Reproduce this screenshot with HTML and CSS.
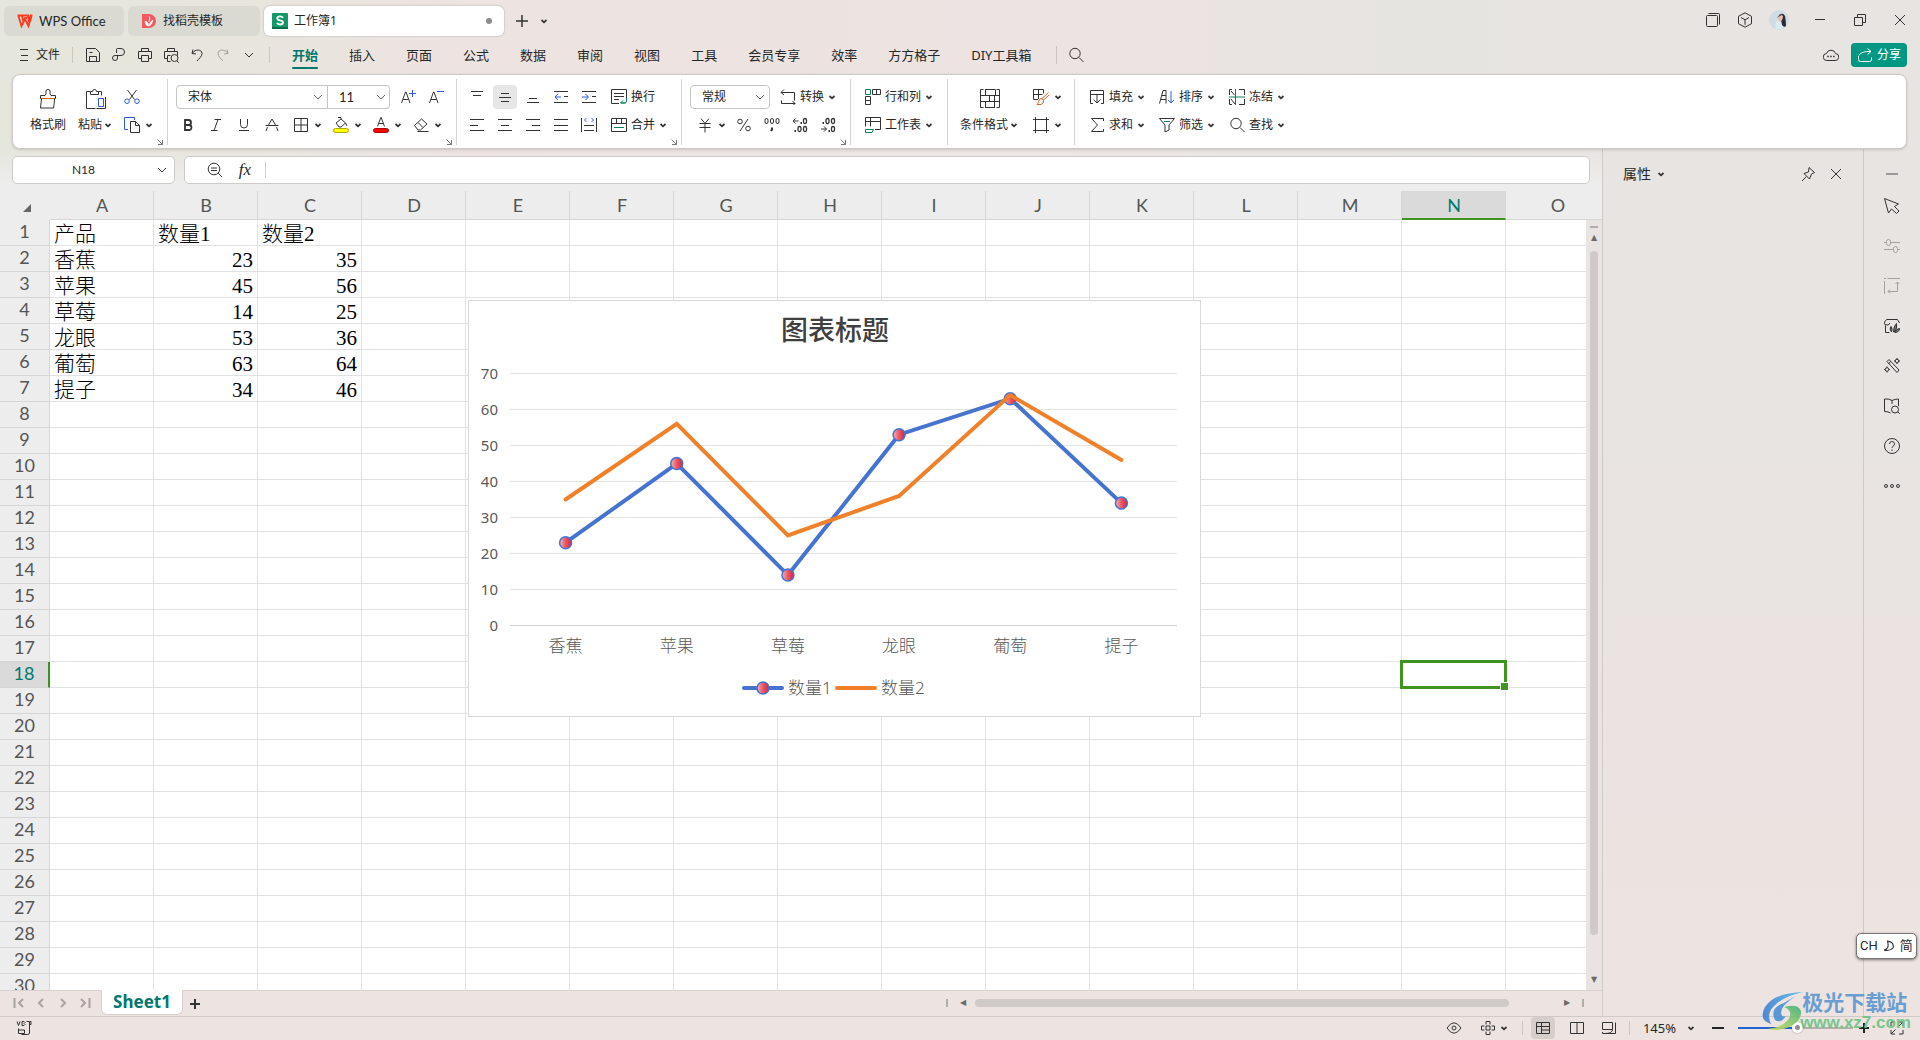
FILE: index.html
```html
<!DOCTYPE html>
<html lang="zh-CN">
<head>
<meta charset="utf-8">
<title>工作簿1 - WPS Office</title>
<link rel="stylesheet" href="styles.css">
</head>
<body>
<svg class="sprite" aria-hidden="true">
  <symbol id="chev" viewBox="0 0 12 12"><path d="M3.500 5 6 7.300 8.500 5" stroke-width="1.700"/></symbol>
  <symbol id="chev-thin" viewBox="0 0 12 12"><path d="M2 4l4 4 4-4"/></symbol>
  <symbol id="menu" viewBox="0 0 16 16"><path d="M4 2.500h8M5 8.500h7M4 13.500h8"/></symbol>
  <symbol id="save" viewBox="0 0 16 16"><path d="M1.500 1.500h9l4 4v9h-13zM4.500 14.500v-5h7v5M4.500 5.500h3"/></symbol>
  <symbol id="pdf" viewBox="0 0 16 16"><path d="M5.500 6V2.500Q5.500 1.500 6.500 1.500H10a3.500 3.500 0 0 1 0 7H4a2.500 2.500 0 1 0 2.500 2.500V8.500"/></symbol>
  <symbol id="print" viewBox="0 0 16 16"><path d="M4.500 4.500v-3h7v3M4.500 11.500h-3v-7h13v7h-3M4.500 8.500h7v6h-7z"/></symbol>
  <symbol id="preview" viewBox="0 0 16 16"><path d="M4.500 4.500v-3h7v3M4.500 11.500h-3v-7h13v4M4.500 14.500v-6h3M4.500 14.500h3M14 14l1.800 1.800"/><circle cx="11.500" cy="11" r="3.500"/></symbol>
  <symbol id="undo" viewBox="0 0 16 16"><path d="M4 2.500 3 6.500l4 .5M3.500 6C6 2 13 2 13 6.500c0 3-3 5-5 7.500"/></symbol>
  <symbol id="redo" viewBox="0 0 16 16"><path d="M12 2.500l1 4-4 .5M12.500 6C10 2 3 2 3 6.500c0 3 3 5 5 7.500"/></symbol>
  <symbol id="search" viewBox="0 0 16 16"><circle cx="7" cy="6.500" r="5.200"/><path d="m11 10.500 4.500 4.500"/></symbol>
  <symbol id="plus" viewBox="0 0 16 16"><path d="M8 2v12M2 8h12" stroke-width="1.500"/></symbol>
  <symbol id="minus" viewBox="0 0 16 16"><path d="M2 8h12" stroke-width="2"/></symbol>
  <symbol id="windows" viewBox="0 0 16 16"><rect x="1.500" y="3.500" width="11" height="11" rx="1"/><path d="M3.500 1.500h10q1 0 1 1v10"/></symbol>
  <symbol id="cube" viewBox="0 0 16 16"><path d="M8 .8l6.500 3.500v7.400L8 15.200 1.500 11.700V4.300zM4 5.500l4 2.300 4-2.300M8 7.800v5"/></symbol>
  <symbol id="win-min" viewBox="0 0 16 16"><path d="M3 7.500h10"/></symbol>
  <symbol id="restore" viewBox="0 0 16 16"><path d="M2.500 5.500h8v8h-8zM5.500 5.500v-3h8v8h-3"/></symbol>
  <symbol id="close" viewBox="0 0 16 16"><path d="m3 3 10 10M13 3 3 13"/></symbol>
  <symbol id="cloud" viewBox="0 0 16 16"><path d="M4 13.500a3.500 3.500 0 0 1-.5-7 4.700 4.700 0 0 1 9 0 3.500 3.500 0 0 1-.5 7z"/><path d="M4.300 9.500h1.500m1.400 0h1.500m1.400 0h1.500" stroke-width="1.600"/></symbol>
  <symbol id="share" viewBox="0 0 16 16"><path d="M1.500 9v3.500q0 2 2 2h9q2 0 2-2V10.500M2 8.500Q4 4 14 4.500M10.500 1.500l3.500 3-3.500 3"/></symbol>
  <symbol id="brush" viewBox="0 0 20 20"><path d="M2.500 6.500h4.500l1-1.500V2q0-1.500 2-1.500T12 2v3l1 1.500h4.500v3h-15zM3.500 9.500l-1 9.500h13q1-5 1-9.500"/><path class="or" d="M3.500 9.500h13"/></symbol>
  <symbol id="paste" viewBox="0 0 20 20"><path d="M4 2.500H.500v17h9M12.500 2.500h3v4M4.500 5.500h8v-3h-2q0-2-2-2t-2 2h-2z"/><path class="bl" d="M12.500 9.500h5v8h-5z"/><path d="M19.500 8v11.500H10.500"/></symbol>
  <symbol id="cut" viewBox="0 0 16 16"><path d="m3.500 1 7 9.500M12.500 1l-7 9.500"/><g class="bl"><circle cx="3" cy="12.200" r="2.300"/><circle cx="13" cy="12.200" r="2.300"/></g></symbol>
  <symbol id="copy" viewBox="0 0 16 16"><path class="bl" d="M4 12.500H.500v-12h10V3"/><path d="M6.500 4.500h5l4 4v7h-9zM11.500 4.500v4h4"/></symbol>
  <symbol id="launch" viewBox="0 0 8 8"><path d="m1.500 1.500 5 5M6.500 2v4.500H2"/></symbol>
  <symbol id="a-plus" viewBox="0 0 16 16"><path d="m1.500 14 4-11h.5l4 11M3 10.500h5.500"/><path class="bl" d="M12.500 1v7M9 4.500h7"/></symbol>
  <symbol id="a-minus" viewBox="0 0 16 16"><path d="m1.500 14 4-11h.5l4 11M3 10.500h5.500"/><path class="bl" d="M9 2.500h7"/></symbol>
  <symbol id="bold" viewBox="0 0 16 16"><path d="M5 3h3.500a2.300 2.300 0 0 1 0 5H5zM5 8h4a2.500 2.500 0 0 1 0 5H5z" stroke-width="1.800"/></symbol>
  <symbol id="italic" viewBox="0 0 16 16"><path d="M6.500 2.500H13M3 13.500h6.500M10 2.500l-4 11"/></symbol>
  <symbol id="under" viewBox="0 0 16 16"><path d="M4.500 2v5.500a3.500 3.500 0 0 0 7 0V2M3 13.500h10"/></symbol>
  <symbol id="strike" viewBox="0 0 16 16"><path d="M1.500 8.500h13M4.500 8 8 2l3.500 6M3.500 10l-1.500 4M12.500 10l1.500 4"/></symbol>
  <symbol id="border" viewBox="0 0 16 16"><path d="M1.500 1.500h13v13h-13zM8 1.500v13M1.500 8h13"/></symbol>
  <symbol id="fill" viewBox="0 0 16 16"><path d="m3 6 5-4 4.500 4L8 10H6zM8 2V.500h-3M12.500 6q2 3 .5 3"/><rect x=".5" y="11.500" width="15" height="4" rx="2" fill="#ff0" stroke="#b3a900"/></symbol>
  <symbol id="fcolor" viewBox="0 0 16 16"><path d="m4.500 9.500 3.300-9h.4l3.300 9M5.500 6.500h5"/><rect x=".5" y="11.500" width="15" height="4" rx="2" fill="#f00" stroke="#b00000"/></symbol>
  <symbol id="erase" viewBox="0 0 16 16"><path d="M1.500 8.500l7-6.500 5.500 5-6.500 6H5zM5 5.500l5 5M4.500 14.500h11"/></symbol>
  <symbol id="v-top" viewBox="0 0 16 16"><path d="M2 2.500h12M4 6.500h8"/></symbol>
  <symbol id="v-mid" viewBox="0 0 16 16"><path d="M4 4.500h8M2 8.500h12M4 12.500h8"/></symbol>
  <symbol id="v-bot" viewBox="0 0 16 16"><path d="M4 9.500h8M2 13.500h12"/></symbol>
  <symbol id="outdent" viewBox="0 0 16 16"><path d="M1 2.500h14M11 7.500h4M1 13.500h14"/><path class="bl" d="M2 8h6M5 5 2 8l3 3"/></symbol>
  <symbol id="indent" viewBox="0 0 16 16"><path d="M1 2.500h14M11 7.500h4M1 13.500h14"/><path class="bl" d="M1 8h6M4.500 5l3 3-3 3"/></symbol>
  <symbol id="left" viewBox="0 0 16 16"><path d="M1 2.500h14M1 8.500h8M1 13.500h14"/></symbol>
  <symbol id="center" viewBox="0 0 16 16"><path d="M1 2.500h14M4 8.500h8M1 13.500h14"/></symbol>
  <symbol id="right" viewBox="0 0 16 16"><path d="M1 2.500h14M7 8.500h8M1 13.500h14"/></symbol>
  <symbol id="justify" viewBox="0 0 16 16"><path d="M1 2.500h14M1 8.500h14M1 13.500h14"/></symbol>
  <symbol id="distrib" viewBox="0 0 16 16"><path d="M.500 1v14M15.500 1v14M3 8.500h10M3 13.500h10"/><path class="bl" d="M5.500 1 3.500 3l2 2M10.500 1l2 2-2 2"/></symbol>
  <symbol id="wrap" viewBox="0 0 16 16"><path d="M8 14.500H.500v-14h15V9M3 4.500h10M3 7.500h10M3 10.500h5"/><path class="gr" d="M15.500 9v3q0 2-2 2H10M12 11.500l-2.500 2.500h5"/></symbol>
  <symbol id="merge" viewBox="0 0 16 16"><path d="M.500 1.500h15v13H.500zM.500 6.500h15M5.500 1.500v5M10.500 1.500v5"/><path class="gr" d="M3 10.500h10"/></symbol>
  <symbol id="convert" viewBox="0 0 16 16"><path d="M1.500 11.500v3H15M4 .500l-3 3h13.500v8M12.500 12l2.500 2.500-2.500 2.500M1 3.500l3 2.500"/></symbol>
  <symbol id="yen" viewBox="0 0 16 16"><path d="m4 1.500 4 5 4-5M8 6.500v9M2.500 6.500h11M2.500 10.500h11"/></symbol>
  <symbol id="percent" viewBox="0 0 16 16"><circle cx="4" cy="4.500" r="2.300"/><circle cx="12" cy="11.500" r="2.300"/><path d="m12 2-8 12"/></symbol>
  <symbol id="thousand" viewBox="0 0 16 16"><rect x="1" y="1.500" width="3" height="5" rx="1.500"/><rect x="6.500" y="1.500" width="3" height="5" rx="1.500"/><rect x="12" y="1.500" width="3" height="5" rx="1.500"/><path d="M8 10.500v2l-1 1.500" stroke-width="2"/></symbol>
  <symbol id="dec-more" viewBox="0 0 16 16"><path d="M1 4h5.500M3.500 1.500 1 4l2.500 2.500"/><path d="M8.500 6h1.500M2.500 14h1.500" stroke-width="1.800"/><rect x="11.500" y="1.500" width="3" height="5" rx="1.500" stroke-width="1.300"/><rect x="6" y="9.500" width="3" height="5" rx="1.500" stroke-width="1.300"/><rect x="11.500" y="9.500" width="3" height="5" rx="1.500" stroke-width="1.300"/></symbol>
  <symbol id="dec-less" viewBox="0 0 16 16"><path d="M1 12h5.500M4 9.500 6.500 12 4 14.500"/><path d="M2.500 6h1.500M8.500 14h1.500" stroke-width="1.800"/><rect x="6" y="1.500" width="3" height="5" rx="1.500" stroke-width="1.300"/><rect x="11.500" y="1.500" width="3" height="5" rx="1.500" stroke-width="1.300"/><rect x="11.500" y="9.500" width="3" height="5" rx="1.500" stroke-width="1.300"/></symbol>
  <symbol id="rowcol" viewBox="0 0 16 16"><path class="gr" d="M.500.500h5v5h-5z"/><path d="M7.500.500h8v5h-8zM11.500.500v5M.500 7.500h5v8h-5zM.500 11.500h5"/></symbol>
  <symbol id="sheet" viewBox="0 0 16 16"><path d="M.500 9.500v-9h15v12H10M.500 4.500h15M5.500.500v9"/><path class="gr" d="M.500 12.500h8l-1.500 3H.500z"/></symbol>
  <symbol id="cond" viewBox="0 0 20 20"><path d="M3.500.500h-3v18h3M16.500.500h3v18h-3M5 .500h10M5 18.500h10M.500 6.500h19M.500 12.500h19M5.500 1v5M14.500 6.500v6M9.500 6.500v6M5.500 12.500v6M15.500.500v6M14.500 12.500v6"/></symbol>
  <symbol id="cellstyle" viewBox="0 0 16 16"><path d="M5 10.500H.500V.500h10v4M.500 5.500h9M5.500.500v9.500"/><path class="or" d="m8.500 10 7-6.500M10 11.500l6-5.500M9 9.500q-3 0-3.500 3Q5 15 4 15.500h4q3-1 2.500-4z"/></symbol>
  <symbol id="frame" viewBox="0 0 16 16"><path d="M2.500 0v16M13.500 0v16M0 2.500h16M0 13.500h16"/></symbol>
  <symbol id="filldown" viewBox="0 0 16 16"><path d="M4 14.500H1.500v-13h13v13H12M1.500 5.500h13M8 5.500v8M4.500 10.500l3.500 3.500 3.500-3.500"/></symbol>
  <symbol id="sum" viewBox="0 0 16 16"><path d="M14.500 4V1.500h-12l6 6.500-6 6.500h12V12"/></symbol>
  <symbol id="sort" viewBox="0 0 16 16"><path d="M.500 14.500 4 1.500h3v13M2 10.500h5M3 6.500h4"/><path class="bl" d="M12 2v12M9 11l3 3 3-3"/></symbol>
  <symbol id="filter" viewBox="0 0 16 16"><path d="M.500 1.500h15L10 8v5l-4 2V8z"/><path class="gr" d="M5 4.500h6"/></symbol>
  <symbol id="freeze" viewBox="0 0 16 16"><path d="M3 .500H.500V6M10 .500h5.500V6M.500 10v5.500H3M10 15.500h5.500V10M2 2l3.500 4M2 10l4 5"/><path class="gr" d="M6.500 0v16M0 8h16"/></symbol>
  <symbol id="zoomout" viewBox="0 0 16 16"><circle cx="7" cy="7" r="5.800"/><path d="m11.200 11.200 3.800 3.800M4 6h6M4 8.500h6"/></symbol>
  <symbol id="pin" viewBox="0 0 16 16"><path d="m9 1.500 5.500 5-3 1.500-2 5L4 7.500 8.500 6zM6.500 10.500 2 15"/></symbol>
  <symbol id="cursor" viewBox="0 0 16 16"><path d="M.500.500 4.500 15l3-4 5 4.500 2.500-2.500L10.500 8.500l4-2.500z"/></symbol>
  <symbol id="sliders" viewBox="0 0 16 16"><path d="M0 4.500h2.500M6.500 4.500H16M0 11.500h9.500M13.500 11.500H16"/><rect x="2.500" y="1.500" width="4" height="6" rx="2"/><rect x="9.500" y="8.500" width="4" height="6" rx="2"/></symbol>
  <symbol id="transpose" viewBox="0 0 16 16"><path d="M0 .5h2M3.500.500H16M.500 3v13M13.500 4v9.500H4M11.500 6l2-2 2 2M6 11.500l-2 2 2 2"/></symbol>
  <symbol id="gallery" viewBox="0 0 16 16"><path d="M5.500 14.500h-4V7.500Q-.5 5 1 3.500L2.500 1.500h11l2 3.500M1.500 6.500q3 2 4.500-1.500"/><path d="M7.500 14q-2.500-3-.5-5.500Q9 11 7.500 14zM9.500 14q0-6 3-8.500 1 5-2 8.500zM11 14q1-3 4.500-3.500Q15.500 14 11 14.500z" class="solid"/></symbol>
  <symbol id="wand" viewBox="0 0 16 16"><path d="m3 3.500 2-2 10 10.500-2 2.500zM6.500 3.500 4.500 6"/><circle cx="13" cy="3" r="1.800"/><circle cx="3" cy="11.500" r="1.800"/><path d="M13 0v1.200M13 4.800V6M10 3h1.200M14.800 3H16M3 8.500v1.200M3 13.300v1.200M0 11.500h1.200M4.800 11.500H6"/></symbol>
  <symbol id="book" viewBox="0 0 16 16"><path d="M8 6V2.500q-3-2-7.500-1.500v12.500q4 0 6 1.500M8 2.500q3-1.500 6.500-1.500v7M14 14l1.800 1.800"/><circle cx="11" cy="11.500" r="3.500"/></symbol>
  <symbol id="help" viewBox="0 0 16 16"><circle cx="8" cy="8" r="7.500"/><path d="M5.500 6a2.500 2.500 0 1 1 3.500 2.300q-1 .5-1 1.500M8 11.500v1.500"/></symbol>
  <symbol id="dots" viewBox="0 0 16 16"><circle cx="2" cy="8" r="1.500"/><circle cx="8" cy="8" r="1.500"/><circle cx="14" cy="8" r="1.500"/></symbol>
  <symbol id="first" viewBox="0 0 16 16"><path d="M3.500 3v10M12 4 8 8l4 4" stroke-width="2"/></symbol>
  <symbol id="prev" viewBox="0 0 16 16"><path d="M10 4 6 8l4 4" stroke-width="2"/></symbol>
  <symbol id="next" viewBox="0 0 16 16"><path d="m6 4 4 4-4 4" stroke-width="2"/></symbol>
  <symbol id="last" viewBox="0 0 16 16"><path d="m4 4 4 4-4 4M12.500 3v10" stroke-width="2"/></symbol>
  <symbol id="macro" viewBox="0 0 16 16"><path d="m1 1.500 1.500 4L4 1.500M6 1.500h2l1 1-1 1 1 1-1 1H6zM10.500 1.500h3V13q0 1.500-2 1.500H5.500M14 1.500h1v3h-1.500M2.500 8.500v5h6v-3.500h-6"/></symbol>
  <symbol id="eye" viewBox="0 0 16 16"><path d="M1 8q7-10.500 14 0-7 10.500-14 0z"/><circle cx="8" cy="8" r="2"/></symbol>
  <symbol id="cross" viewBox="0 0 16 16"><path d="M6 4.500v-3h4v3M6 11.500v3h4v-3M4.500 6h-3v4h3M11.500 6h3v4h-3M6 6h4v4H6z"/></symbol>
  <symbol id="view-n" viewBox="0 0 16 16"><path d="M1.500 2.500h13v11h-13zM1.500 6.500h13M6.500 2.500v11M6.500 10h8"/></symbol>
  <symbol id="view-p" viewBox="0 0 16 16"><path d="M1.500 2.500h13v11h-13zM8 2.500v11"/></symbol>
  <symbol id="view-b" viewBox="0 0 16 16"><path d="M1.500 2.500h10v7h-10zM1.500 12v1.500H14.500V2.500M4 13.500q7.500 0 7.500-4"/></symbol>
  <symbol id="full" viewBox="0 0 16 16"><path d="M2 6V2h4M10 2h4v4M14 10v4h-4M6 14H2v-4M9.500 6.500 14 2M6.500 9.500 2 14"/></symbol>
  <symbol id="moon" viewBox="0 0 16 16"><path d="M6 1.500q9 1 7.500 9-5 5-12 3Q9 12 6 1.500z" stroke-width="1.500"/></symbol>
</svg>

<header class="titlebar">
  <nav class="doc-tabs">
    <button class="doc-tab home"><svg class="i16" viewBox="0 0 16 16"><path d="M.500 2.500h4.500L6.500 9 8 5h2M5 2.500h6L12 9l1.500-6.500h2M1.500 3.500 4.500 13 8 6l3.500 7 3-9.500" fill="none" stroke="#fa3b1e" stroke-width="1.800"/></svg><span class="latin">WPS Office</span></button>
    <button class="doc-tab docer"><svg class="i16" viewBox="0 0 16 16"><path d="M1 1h7a7 7 0 0 1 0 14H1z" fill="#f15a5f" stroke="none"/><path d="M4 8q3 0 4 5 1-5 4-6-1 5-4 6Q4 13 4 8zM8 3q2 2 0 6" fill="#fff" stroke="#fff" stroke-width=".5"/></svg>找稻壳模板</button>
    <button class="doc-tab active"><svg class="i16" viewBox="0 0 16 16"><rect width="16" height="16" rx="1" fill="#12996a" stroke="none"/><path d="M0 14h16v2H0z" fill="#0b6d4b" stroke="none"/><path d="M11 4.800Q10 3.300 8 3.300 5.300 3.300 5.300 5.200 5.300 7 8 7.300q3 .4 3 2.200 0 2-3 2-2.200 0-3-1.600" fill="none" stroke="#fff" stroke-width="1.800"/></svg>工作簿1<span class="unsaved"></span></button>
    <button class="bare"><svg class="i16"><use href="#plus"/></svg></button>
    <button class="bare slim"><svg class="i12"><use href="#chev"/></svg></button>
  </nav>
  <div class="window-tools">
    <button class="bare"><svg class="i16"><use href="#windows"/></svg></button>
    <button class="bare"><svg class="i16"><use href="#cube"/></svg></button>
    <svg class="avatar" viewBox="0 0 20 20"><circle cx="10" cy="10" r="10" fill="#cfdce3" stroke="none"/><path d="M7 19q-2-6 3-10 4 2 4 9-3 2-7 1z" fill="#dcebf0" stroke="none"/><path d="M10 5q4-3 6 1 1 5 1 10-2 2-4-1l-1-5z" fill="#2a2a38" stroke="none"/><path d="M9 6q3-3 5 0 0 4-3 6-2-1-2-6z" fill="#e2bdb2" stroke="none"/><path d="M8 8q2-4 5-3-3 1-5 3z" fill="#2a2a38" stroke="none"/></svg>
    <button class="bare wide"><svg class="i16"><use href="#win-min"/></svg></button>
    <button class="bare wide"><svg class="i16"><use href="#restore"/></svg></button>
    <button class="bare wide"><svg class="i16"><use href="#close"/></svg></button>
  </div>
</header>

<nav class="menubar">
  <button class="file"><svg class="i16"><use href="#menu"/></svg>文件</button>
  <div class="quick">
    <button class="qb"><svg class="i16"><use href="#save"/></svg></button>
    <button class="qb"><svg class="i16"><use href="#pdf"/></svg></button>
    <button class="qb"><svg class="i16"><use href="#print"/></svg></button>
    <button class="qb"><svg class="i16"><use href="#preview"/></svg></button>
    <button class="qb"><svg class="i16"><use href="#undo"/></svg></button>
    <button class="qb dim"><svg class="i16"><use href="#redo"/></svg></button>
    <button class="qb"><svg class="i12"><use href="#chev-thin"/></svg></button>
  </div>
  <div class="menu-tabs">
    <button class="current">开始</button><button>插入</button><button>页面</button><button>公式</button><button>数据</button><button>审阅</button><button>视图</button><button>工具</button><button>会员专享</button><button>效率</button><button>方方格子</button><button>DIY工具箱</button>
  </div>
  <button class="find"><svg class="i16"><use href="#search"/></svg></button>
  <div class="menu-right">
    <button class="bare slim"><svg class="i16"><use href="#cloud"/></svg></button>
    <button class="share"><svg class="i16"><use href="#share"/></svg>分享</button>
  </div>
</nav>

<section class="ribbon">
  <div class="group g-clip">
    <button class="big"><svg class="i20"><use href="#brush"/></svg><span>格式刷</span></button>
    <button class="big"><svg class="i20"><use href="#paste"/></svg><span>粘贴<svg class="i12"><use href="#chev"/></svg></span></button>
    <div class="stack">
      <div class="row"><button class="ib cutb"><svg class="i16"><use href="#cut"/></svg></button></div>
      <div class="row"><button class="split"><svg class="i16"><use href="#copy"/></svg><svg class="i12"><use href="#chev"/></svg></button></div>
    </div>
    <button class="launch"><svg class="i8"><use href="#launch"/></svg></button>
  </div>
  <div class="group g-font">
    <div class="stack">
      <div class="row fonts">
        <div class="combo"><select class="font-name" aria-label="字体"><option>宋体</option></select><svg class="i12"><use href="#chev-thin"/></svg></div>
        <div class="combo"><select class="font-size" aria-label="字号"><option>11</option></select><svg class="i12"><use href="#chev-thin"/></svg></div>
        <button class="ib first"><svg class="i16"><use href="#a-plus"/></svg></button>
        <button class="ib"><svg class="i16"><use href="#a-minus"/></svg></button>
      </div>
      <div class="row">
        <button class="ib"><svg class="i16"><use href="#bold"/></svg></button>
        <button class="ib"><svg class="i16"><use href="#italic"/></svg></button>
        <button class="ib"><svg class="i16"><use href="#under"/></svg></button>
        <button class="ib"><svg class="i16"><use href="#strike"/></svg></button>
        <button class="split"><svg class="i16"><use href="#border"/></svg><svg class="i12"><use href="#chev"/></svg></button>
        <button class="split"><svg class="i16"><use href="#fill"/></svg><svg class="i12"><use href="#chev"/></svg></button>
        <button class="split"><svg class="i16"><use href="#fcolor"/></svg><svg class="i12"><use href="#chev"/></svg></button>
        <button class="split"><svg class="i16"><use href="#erase"/></svg><svg class="i12"><use href="#chev"/></svg></button>
      </div>
    </div>
    <button class="launch"><svg class="i8"><use href="#launch"/></svg></button>
  </div>
  <div class="group g-align">
    <div class="stack">
      <div class="row">
        <button class="ib"><svg class="i16"><use href="#v-top"/></svg></button>
        <button class="ib on"><svg class="i16"><use href="#v-mid"/></svg></button>
        <button class="ib"><svg class="i16"><use href="#v-bot"/></svg></button>
        <button class="ib"><svg class="i16"><use href="#outdent"/></svg></button>
        <button class="ib"><svg class="i16"><use href="#indent"/></svg></button>
      </div>
      <div class="row">
        <button class="ib"><svg class="i16"><use href="#left"/></svg></button>
        <button class="ib"><svg class="i16"><use href="#center"/></svg></button>
        <button class="ib"><svg class="i16"><use href="#right"/></svg></button>
        <button class="ib"><svg class="i16"><use href="#justify"/></svg></button>
        <button class="ib"><svg class="i16"><use href="#distrib"/></svg></button>
      </div>
    </div>
    <div class="stack gap">
      <div class="row"><button class="tb"><svg class="i16"><use href="#wrap"/></svg>换行</button></div>
      <div class="row"><button class="tb"><svg class="i16"><use href="#merge"/></svg>合并<svg class="i12"><use href="#chev"/></svg></button></div>
    </div>
    <button class="launch"><svg class="i8"><use href="#launch"/></svg></button>
  </div>
  <div class="group g-num">
    <div class="stack">
      <div class="row">
        <div class="combo solo"><select class="num-format" aria-label="数字格式"><option>常规</option></select><svg class="i12"><use href="#chev-thin"/></svg></div>
        <button class="tb conv"><svg class="i16"><use href="#convert"/></svg>转换<svg class="i12"><use href="#chev"/></svg></button>
      </div>
      <div class="row">
        <button class="split"><svg class="i16"><use href="#yen"/></svg><svg class="i12"><use href="#chev"/></svg></button>
        <button class="ib"><svg class="i16"><use href="#percent"/></svg></button>
        <button class="ib"><svg class="i16"><use href="#thousand"/></svg></button>
        <button class="ib"><svg class="i16"><use href="#dec-more"/></svg></button>
        <button class="ib"><svg class="i16"><use href="#dec-less"/></svg></button>
      </div>
    </div>
    <button class="launch"><svg class="i8"><use href="#launch"/></svg></button>
  </div>
  <div class="group g-rows">
    <div class="stack">
      <div class="row"><button class="tb"><svg class="i16"><use href="#rowcol"/></svg>行和列<svg class="i12"><use href="#chev"/></svg></button></div>
      <div class="row"><button class="tb"><svg class="i16"><use href="#sheet"/></svg>工作表<svg class="i12"><use href="#chev"/></svg></button></div>
    </div>
  </div>
  <div class="group g-style">
    <button class="big"><svg class="i20"><use href="#cond"/></svg><span>条件格式<svg class="i12"><use href="#chev"/></svg></span></button>
    <div class="stack gap">
      <div class="row"><button class="split"><svg class="i16"><use href="#cellstyle"/></svg><svg class="i12"><use href="#chev"/></svg></button></div>
      <div class="row"><button class="split"><svg class="i16"><use href="#frame"/></svg><svg class="i12"><use href="#chev"/></svg></button></div>
    </div>
  </div>
  <div class="group g-edit">
    <div class="stack">
      <div class="row">
        <button class="tb"><svg class="i16"><use href="#filldown"/></svg>填充<svg class="i12"><use href="#chev"/></svg></button>
        <button class="tb"><svg class="i16"><use href="#sort"/></svg>排序<svg class="i12"><use href="#chev"/></svg></button>
        <button class="tb"><svg class="i16"><use href="#freeze"/></svg>冻结<svg class="i12"><use href="#chev"/></svg></button>
      </div>
      <div class="row">
        <button class="tb"><svg class="i16"><use href="#sum"/></svg>求和<svg class="i12"><use href="#chev"/></svg></button>
        <button class="tb"><svg class="i16"><use href="#filter"/></svg>筛选<svg class="i12"><use href="#chev"/></svg></button>
        <button class="tb"><svg class="i16"><use href="#search"/></svg>查找<svg class="i12"><use href="#chev"/></svg></button>
      </div>
    </div>
  </div>
</section>

<main class="workspace">
  <section class="book">
    <div class="formula-bar">
      <div class="name-box"><input type="text" value="N18" aria-label="名称框"><button class="bare slim"><svg class="i12"><use href="#chev-thin"/></svg></button></div>
      <div class="formula">
        <button class="bare slim"><svg class="i16"><use href="#zoomout"/></svg></button>
        <button class="bare slim fx">fx</button>
        <input type="text" aria-label="编辑栏">
      </div>
    </div>
    <div class="sheet">
      <table class="cells">
        <thead><tr id="letters"></tr></thead>
        <tbody id="rows"></tbody>
      </table>
      <svg class="chart" viewBox="0 0 733 417" role="img" aria-label="图表标题">
        <defs><linearGradient id="ball"><stop offset="0" stop-color="#f4b3b9"/><stop offset=".5" stop-color="#e85866"/><stop offset="1" stop-color="#dd1f3c"/></linearGradient></defs>
        <rect class="frame" x=".5" y=".5" width="732" height="416"/>
        <text class="title" x="367" y="40">图表标题</text>
        <g id="scale"></g>
        <g id="plot"></g>
        <path class="s1" d="M276 388h38"/><circle class="ball" cx="295" cy="388" r="6"/><text class="legend" x="320" y="394">数量1</text>
        <path class="s2" d="M369 388h38"/><text class="legend" x="413" y="394">数量2</text>
      </svg>
      <div class="vscroll"><span class="tick"></span><span class="arrow">▲</span><div class="track"><div class="thumb"></div></div><span class="arrow">▼</span></div>
    </div>
    <div class="sheet-tabs">
      <div class="nav"><button><svg class="i16"><use href="#first"/></svg></button><button><svg class="i16"><use href="#prev"/></svg></button><button><svg class="i16"><use href="#next"/></svg></button><button><svg class="i16"><use href="#last"/></svg></button></div>
      <button class="sheet-tab">Sheet1</button>
      <button class="add"><svg class="i12" viewBox="0 0 12 12"><path d="M6 1v10M1 6h10" stroke-width="2"/></svg></button>
      <div class="hscroll"><span class="tick"></span><span class="arrow">◀</span><div class="track"><div class="thumb"></div></div><span class="arrow">▶</span><span class="tick"></span></div>
    </div>
  </section>
  <aside class="pane">
    <header><button class="pane-title">属性<svg class="i12"><use href="#chev"/></svg></button><button class="bare slim"><svg class="i16"><use href="#pin"/></svg></button><button class="bare slim"><svg class="i16"><use href="#close"/></svg></button></header>
  </aside>
  <aside class="rail">
    <button class="grip"><svg class="i16"><use href="#minus"/></svg></button>
    <button><svg class="i16"><use href="#cursor"/></svg></button>
    <button class="dim"><svg class="i16"><use href="#sliders"/></svg></button>
    <button class="dim"><svg class="i16"><use href="#transpose"/></svg></button>
    <button><svg class="i16"><use href="#gallery"/></svg></button>
    <button><svg class="i16"><use href="#wand"/></svg></button>
    <button><svg class="i16"><use href="#book"/></svg></button>
    <button><svg class="i16"><use href="#help"/></svg></button>
    <button><svg class="i16"><use href="#dots"/></svg></button>
  </aside>
</main>

<footer class="status">
  <button class="macro"><svg class="i16"><use href="#macro"/></svg></button>
  <div class="status-right">
    <button class="eye"><svg class="i16"><use href="#eye"/></svg></button>
    <button class="move"><svg class="i16"><use href="#cross"/></svg><svg class="i12"><use href="#chev"/></svg></button>
    <div class="views">
      <button class="on"><svg class="i16"><use href="#view-n"/></svg></button>
      <button><svg class="i16"><use href="#view-p"/></svg></button>
      <button><svg class="i16"><use href="#view-b"/></svg></button>
    </div>
    <button class="percent">145%<svg class="i12"><use href="#chev"/></svg></button>
    <button class="zoom-step"><svg class="i16"><use href="#minus"/></svg></button>
    <input class="zoom" type="range" min="0" max="100" value="52" aria-label="缩放">
    <button class="zoom-step"><svg class="i12" viewBox="0 0 12 12"><path d="M6 1v10M1 6h10" stroke-width="2"/></svg></button>
    <button class="full"><svg class="i16"><use href="#full"/></svg></button>
  </div>
</footer>

<div class="ime">CH<svg class="i12"><use href="#moon"/></svg>简</div>
<div class="watermark">
  <svg viewBox="0 0 44 40"><defs><linearGradient id="wm" x1="0" y1="0" x2="1" y2="0"><stop offset="0" stop-color="#3f7fd0"/><stop offset="1" stop-color="#5cc0ec"/></linearGradient><linearGradient id="wg" x1="0" y1="1" x2="1" y2="0"><stop offset="0" stop-color="#d9e25a"/><stop offset="1" stop-color="#3fb07c"/></linearGradient></defs>
    <path d="M43 1Q14 2 5 16-2 29 11 33 6 23 14 15 24 5 43 1z" fill="url(#wm)"/>
    <path d="M15 29Q9 17 24 12 32 7 36 5 21 14 21 22q1 5 5 3-5 8-11 4z" fill="#4a90d6"/>
    <path d="M24 16q14-4 17 4 1 10-12 16-10 5-22 2 14-1 21-9 6-9-4-13z" fill="url(#wg)"/></svg>
  <div><strong>极光下载站</strong><em>www.xz7.com</em></div>
</div>
<script src="app.js"></script>
</body>
</html>
```
FILE: styles.css
```css
* { box-sizing: border-box; }
body {
  margin: 0; height: 100vh; overflow: hidden; display: flex; flex-direction: column;
  font: 12px/16px "Noto Sans", "Noto Sans CJK SC", sans-serif; color: #262626;
  background:
    linear-gradient(to bottom, rgba(237,227,225,0) 40%, #ede3e1 90%),
    linear-gradient(to right, #e5e6dc 0, #e8e5dd 13%, #ede3e1 24%, #ece4e2 60%, #e5e4e0 74%, #e8e4e1 84%, #e8e4e1 100%);
}
button, input, select { font: inherit; color: inherit; border: 0; background: none; padding: 0; margin: 0; outline: 0; }
button { display: flex; align-items: center; justify-content: center; white-space: nowrap; }
svg { fill: none; stroke: #333; stroke-width: 1; flex: none; display: block; overflow: visible; }
.sprite { position: absolute; width: 0; height: 0; }
.i8 { width: 8px; height: 8px; }
.i12 { width: 12px; height: 12px; }
.i16 { width: 16px; height: 16px; }
.i20 { width: 20px; height: 20px; }
.bl { stroke: #2b5bdc; }
.gr { stroke: #0b7d5b; }
.or { stroke: #cf6530; }
.solid { fill: #777; }
.dim svg { stroke: #a3a09e; }
.bare { width: 32px; height: 24px; }
.bare.slim { width: 24px; }
.bare.wide { width: 40px; }

/* title bar */
.titlebar { display: flex; justify-content: space-between; height: 36px; padding: 6px 0 0 4px; flex: none; }
.doc-tabs { display: flex; gap: 4px; align-items: center; }
.doc-tab { height: 30px; border-radius: 6px; background: #dadad2; justify-content: flex-start; gap: 6px; padding: 0 13px; }
.doc-tab.home { width: 120px; }
.doc-tab.docer { width: 132px; }
.doc-tab.active { width: 240px; padding: 0 12px 0 8px; background: #fff; box-shadow: 0 0 2px rgba(0,0,0,.3); }
.latin { font: 13px/16px Lato, sans-serif; }
.unsaved { width: 6px; height: 6px; border-radius: 3px; background: #8c8c8c; margin-left: auto; }
.doc-tabs .bare { width: 24px; margin-left: 2px; }
.doc-tabs .bare.slim { width: 12px; margin: 0; }
.window-tools { display: flex; align-items: center; height: 28px; }
.avatar { width: 20px; height: 20px; margin: 0 11px 0 8px; }

/* menu bar */
.menubar { display: flex; align-items: center; height: 38px; padding: 0 13px 0 16px; flex: none; }
.file { gap: 4px; padding-right: 12px; border-right: 1px solid #c9c7c0; }
.quick { display: flex; padding: 0 7px; border-right: 1px solid #c9c7c0; }
.qb { width: 26px; height: 16px; }
.menu-tabs { display: flex; gap: 31px; padding: 0 25px 0 22px; font-size: 13px; border-right: 1px solid #c9c4c1; }
.menu-tabs button { height: 18px; position: relative; }
.menu-tabs .current { color: #00786c; font-weight: 700; }
.menu-tabs .current::after { content: ""; position: absolute; left: 0; right: 0; bottom: -5px; height: 2px; border-radius: 1px; background: #00786c; }
.find { margin-left: 11px; }
.menu-right { display: flex; align-items: center; gap: 8px; margin-left: auto; }
.share { width: 56px; height: 24px; border-radius: 4px; background: #009783; color: #fff; gap: 4px; }
.share svg { stroke: #fff; }

/* ribbon */
.ribbon { display: flex; height: 75px; margin: 0 13px 0 12px; padding: 4px 0 3px; flex: none; background: #fff; border: 1px solid #cfc9c6; border-radius: 8px; box-shadow: 0 1px 3px rgba(0,0,0,.14); position: relative; z-index: 1; }
.group { display: flex; align-items: flex-start; padding-top: 4px; border-right: 1px solid #d4d4d4; position: relative; }
.g-clip { padding-left: 11px; padding-right: 11px; }
.g-font { padding-left: 6px; padding-right: 6px; }
.g-align { padding-left: 6px; padding-right: 8px; }
.g-num { padding-left: 8px; padding-right: 8px; }
.g-rows { padding-left: 10px; padding-right: 8px; }
.g-style { padding-left: 10px; padding-right: 8px; }
.g-edit { padding-left: 10px; border-right: 0; }
.stack.gap { margin-left: 4px; }
.row { display: flex; align-items: center; height: 28px; }
.big { flex-direction: column; width: 48px; height: 56px; gap: 8px; justify-content: flex-end; padding-bottom: 6px; }
.big span { display: flex; align-items: center; }
.g-style .big { width: 64px; }
.ib { width: 28px; height: 24px; }
.ib.cutb { width: 24px; }
.ib.on { width: 24px; margin: 0 2px; background: #e6e6e6; border-radius: 4px; }
.ib.first { margin-left: 4px; }
.split { width: 40px; height: 24px; justify-content: flex-start; gap: 3px; padding-left: 7px; }
.g-clip .split { width: 36px; padding-left: 4px; }
.tb { height: 24px; gap: 4px; padding: 0 4px; }
.tb .i12 { margin-left: -2px; }
.conv { margin-left: 6px; }
.g-edit .tb { width: 70px; justify-content: flex-start; }
.launch { position: absolute; right: 3px; bottom: -1px; }
.launch svg { stroke: #777; }
.combo { display: grid; align-items: center; height: 24px; border: 1px solid #c4c4c4; }
.combo > * { grid-area: 1 / 1; }
.combo svg { justify-self: end; margin-right: 3px; stroke: #666; pointer-events: none; }
.combo select { appearance: none; height: 22px; padding-left: 11px; }
.font-name { width: 150px; }
.font-size { width: 62px; font: 13px/20px Lato, sans-serif; }
.num-format { width: 78px; }
.fonts { padding-left: 2px; }
.fonts .combo:first-child { border-radius: 4px 0 0 4px; }
.fonts .combo:nth-child(2) { border-left: 0; border-radius: 0 4px 4px 0; width: 62px; }
.solo { border-radius: 4px; }

/* workspace */
.workspace { flex: 1; min-height: 0; display: grid; grid-template-columns: minmax(0, 1fr) 261px 56px; }
.book { display: flex; flex-direction: column; min-height: 0; min-width: 0; border-right: 1px solid #cfcac8; }
.formula-bar { display: flex; gap: 9px; height: 42px; padding: 7px 12px 7px 12px; flex: none; background: linear-gradient(rgba(237,237,237,0), #ededed 36px); }
.name-box, .formula { display: flex; align-items: center; background: #fff; border: 1px solid #cfcbc8; border-radius: 5px; }
.name-box { width: 163px; }
.name-box input { width: 137px; padding-left: 4px; text-align: center; font: 12px/20px Lato, sans-serif; }
.formula { flex: 1; padding-left: 18px; }
.fx { font: italic 17px/20px "Liberation Serif", serif; margin: 0 8px 0 6px; }
.formula input { flex: 1; height: 16px; border-left: 1px solid #d0d0d0; }
.sheet { flex: 1; min-height: 0; overflow: hidden; position: relative; display: grid; grid-template-columns: minmax(0, 1fr) 16px; grid-template-rows: minmax(0, 1fr); background: #ededed; }
.cells { grid-area: 1 / 1 / 2 / 3; align-self: start; table-layout: fixed; width: 1610px; border-spacing: 0; }
.cells th, .cells td { padding: 0; overflow: hidden; }
.cells th { font: 18px/20px Lato, sans-serif; color: #555; background: #ededed; border-right: 1px solid #d6d6d6; border-bottom: 1px solid #d6d6d6; }
.cells thead th { height: 29px; width: 104px; padding-left: 1px; }
.cells thead .corner { width: 50px; border-right: 0; border-bottom-color: #ededed; }
.corner i { display: block; margin: 6px 0 0 22px; border: 4px solid transparent; border-right-color: #666; border-bottom-color: #666; width: 0; }
.cells tbody th { height: 26px; padding-bottom: 3px; }
.cells td { background: #fff; border-right: 1px solid #e2e2e2; border-bottom: 1px solid #e2e2e2; padding: 2px 4px 0; font: 300 21px/22px "Liberation Serif", "Noto Sans CJK SC", serif; color: #000; white-space: nowrap; }
.cells td.num { text-align: right; }
.cells thead .sel { background: #dadada; color: #00786c; border-bottom: 2px solid #3f9420; }
.cells tbody .sel { background: #dadada; color: #00786c; border-right: 2px solid #3f9420; }
.cells td.picked { position: relative; overflow: visible; }
.picked::before { content: ""; position: absolute; inset: -2px; border: 3px solid #3f9420; }
.picked::after { content: ""; position: absolute; right: -4px; bottom: -4px; width: 7px; height: 7px; border: 1px solid #fff; background: #3f9420; }
.chart { position: absolute; left: 468px; top: 109px; width: 733px; height: 417px; font: 15px "Noto Sans", "Noto Sans CJK SC", sans-serif; }
.chart text { stroke: none; fill: #595959; }
.chart .frame { fill: #fff; stroke: #d9d9d9; }
.chart .title { font-size: 27px; font-weight: 500; fill: #404040; text-anchor: middle; }
.chart .legend, .chart .cat { font-size: 17px; font-weight: 300; }
.chart .cat { text-anchor: middle; }
.chart .val { text-anchor: end; }
.grid-line { stroke: #e3e3e3; }
.axis { stroke: #d0d0d0; }
.s1, .s2 { stroke-width: 4; stroke-linecap: round; stroke-linejoin: miter; }
.s1 { stroke: #4673cf; }
.s2 { stroke: #f08129; }
.ball { fill: url(#ball); stroke: #4673cf; stroke-width: 1.5; }
.vscroll { grid-area: 1 / 2; margin-top: 29px; display: flex; flex-direction: column; align-items: center; background: #e9e4e1; padding: 6px 0 4px; position: relative; }
.arrow { font: 8px/12px "DejaVu Sans", sans-serif; color: #6e6a68; }
.vscroll .tick { width: 8px; height: 2px; background: #b0adab; margin-bottom: 4px; }
.vscroll .track { flex: 1; width: 8px; margin: 7px 0 3px; }
.vscroll .thumb { height: 95%; border-radius: 4px; background: #cfcac8; }
.sheet-tabs { display: flex; height: 26px; flex: none; border-top: 1px solid #d6d0ce; }
.nav { display: flex; align-items: center; padding: 0 0 2px 8px; width: 101px; }
.nav button { width: 22px; }
.nav svg { stroke: #a8a4a2; }
.sheet-tab { width: 82px; height: 25px; margin-top: -1px; background: #fff; border: 1px solid #d6d0ce; border-top: 0; border-radius: 0 0 6px 6px; color: #00786c; font-weight: 700; font-size: 17px; }
.add { width: 24px; }
.hscroll { display: flex; align-items: center; width: 650px; margin: 0 12px 0 auto; padding: 0 6px 2px; }
.hscroll .tick { width: 2px; height: 8px; background: #b0adab; }
.hscroll .arrow { width: 12px; text-align: center; margin: 0 9px; }
.hscroll .track { flex: 1; height: 8px; margin: 0 -3px; }
.hscroll .thumb { width: 92%; height: 8px; border-radius: 4px; background: #cfcac8; }

/* side pane and rail */
.pane { border-right: 1px solid #cfcac8; }
.pane header { display: flex; align-items: center; padding: 13px 13px 0 20px; }
.pane-title { font-size: 14px; line-height: 24px; gap: 4px; margin-right: auto; }
.pane header .bare { width: 28px; }
.rail { display: flex; flex-direction: column; align-items: center; padding-top: 9px; }
.rail button { width: 40px; height: 40px; }
.rail .grip { height: 32px; margin-bottom: -4px; }
.rail .grip svg { stroke: #999; }

/* status bar */
.status { display: flex; align-items: center; justify-content: space-between; height: 24px; flex: none; padding: 0 15px 2px 16px; border-top: 1px solid #cfcac8; }
.status-right, .views, .move { display: flex; align-items: center; }
.eye { margin-right: 18px; }
.move { gap: 2px; margin-right: 12px; }
.views { gap: 12px; padding: 0 10px 0 8px; border: solid #cdc5c3; border-width: 0 1px; height: 14px; }
.views button { width: 20px; height: 22px; }
.views .on { width: 24px; border-radius: 4px; background: #d6cecb; }
.percent { font: 13px/16px "Noto Sans", sans-serif; gap: 9px; margin: 0 13px 0 13px; }
.zoom { appearance: none; width: 115px; height: 12px; margin: 0 3px 0 12px; }
.zoom::-webkit-slider-runnable-track { height: 2px; background: linear-gradient(to right, #1f63d0 52%, #b5b0ae 52%); }
.zoom::-webkit-slider-thumb { appearance: none; width: 11px; height: 11px; margin-top: -5px; border-radius: 50%; background: #8e8e8e; border: 3px solid #fff; box-shadow: 0 0 2px rgba(0,0,0,.4); }
.zoom-step { width: 16px; }
.zoom-step svg { stroke: #222; }
.full { margin-left: 17px; }

/* floating items */
.ime { position: absolute; right: 3px; bottom: 81px; width: 61px; height: 26px; display: flex; align-items: center; justify-content: center; gap: 5px; background: #fff; border: 1px solid #777; border-radius: 5px; box-shadow: 0 1px 3px rgba(0,0,0,.5); font-family: Roboto, "Noto Sans CJK SC", sans-serif; font-size: 13px; }
.watermark { position: absolute; right: 9px; bottom: 7px; display: flex; align-items: center; gap: 0; pointer-events: none; opacity: .9; }
.watermark svg { width: 44px; height: 40px; stroke: none; margin-right: -4px; }
.watermark div { display: flex; flex-direction: column; }
.watermark strong { font: 700 21px/24px "Noto Sans CJK SC", sans-serif; color: #5c97cf; padding-left: 2px; }
.watermark em { font: 700 17px/20px "Liberation Sans", sans-serif; color: #6cc385; }
```
FILE: app.js
```js
const columns = "ABCDEFGHIJKLMNO".split("");
const data = [
  ["产品", "数量1", "数量2"],
  ["香蕉", 23, 35],
  ["苹果", 45, 56],
  ["草莓", 14, 25],
  ["龙眼", 53, 36],
  ["葡萄", 63, 64],
  ["提子", 34, 46],
];
const selected = { column: "N", row: 18 };

document.getElementById("letters").innerHTML =
  '<th class="corner"><i></i></th>' +
  columns.map(c => `<th scope="col"${c === selected.column ? ' class="sel"' : ""}>${c}</th>`).join("");

let rows = "";
for (let r = 1; r <= 30; r++) {
  rows += `<tr><th scope="row"${r === selected.row ? ' class="sel"' : ""}>${r}</th>`;
  columns.forEach((c, i) => {
    const value = data[r - 1]?.[i] ?? "";
    const name = r === selected.row && c === selected.column ? "picked" : typeof value === "number" ? "num" : "";
    rows += `<td${name ? ` class="${name}"` : ""}>${value}</td>`;
  });
  rows += "</tr>";
}
document.getElementById("rows").innerHTML = rows;

// Chart plot area: ten units of value are 36px high
const left = 42, right = 709, base = 325.5;
const step = (right - left) / 6;
const x = i => left + step * (i + 0.5);
const y = v => base - v * 3.6;

let scale = "";
for (let v = 0; v <= 70; v += 10) {
  scale += `<path class="${v ? "grid-line" : "axis"}" d="M${left} ${y(v)}H${right}"/><text class="val" x="30" y="${y(v) + 5}">${v}</text>`;
}
document.getElementById("scale").innerHTML = scale;

const items = data.slice(1);
const line = k => "M" + items.map((d, i) => `${x(i)} ${y(d[k])}`).join("L");
document.getElementById("plot").innerHTML =
  `<path class="s1" d="${line(1)}"/>` +
  items.map((d, i) => `<circle class="ball" cx="${x(i)}" cy="${y(d[1])}" r="6"/>`).join("") +
  `<path class="s2" d="${line(2)}"/>` +
  items.map((d, i) => `<text class="cat" x="${x(i)}" y="352">${d[0]}</text>`).join("");
```
